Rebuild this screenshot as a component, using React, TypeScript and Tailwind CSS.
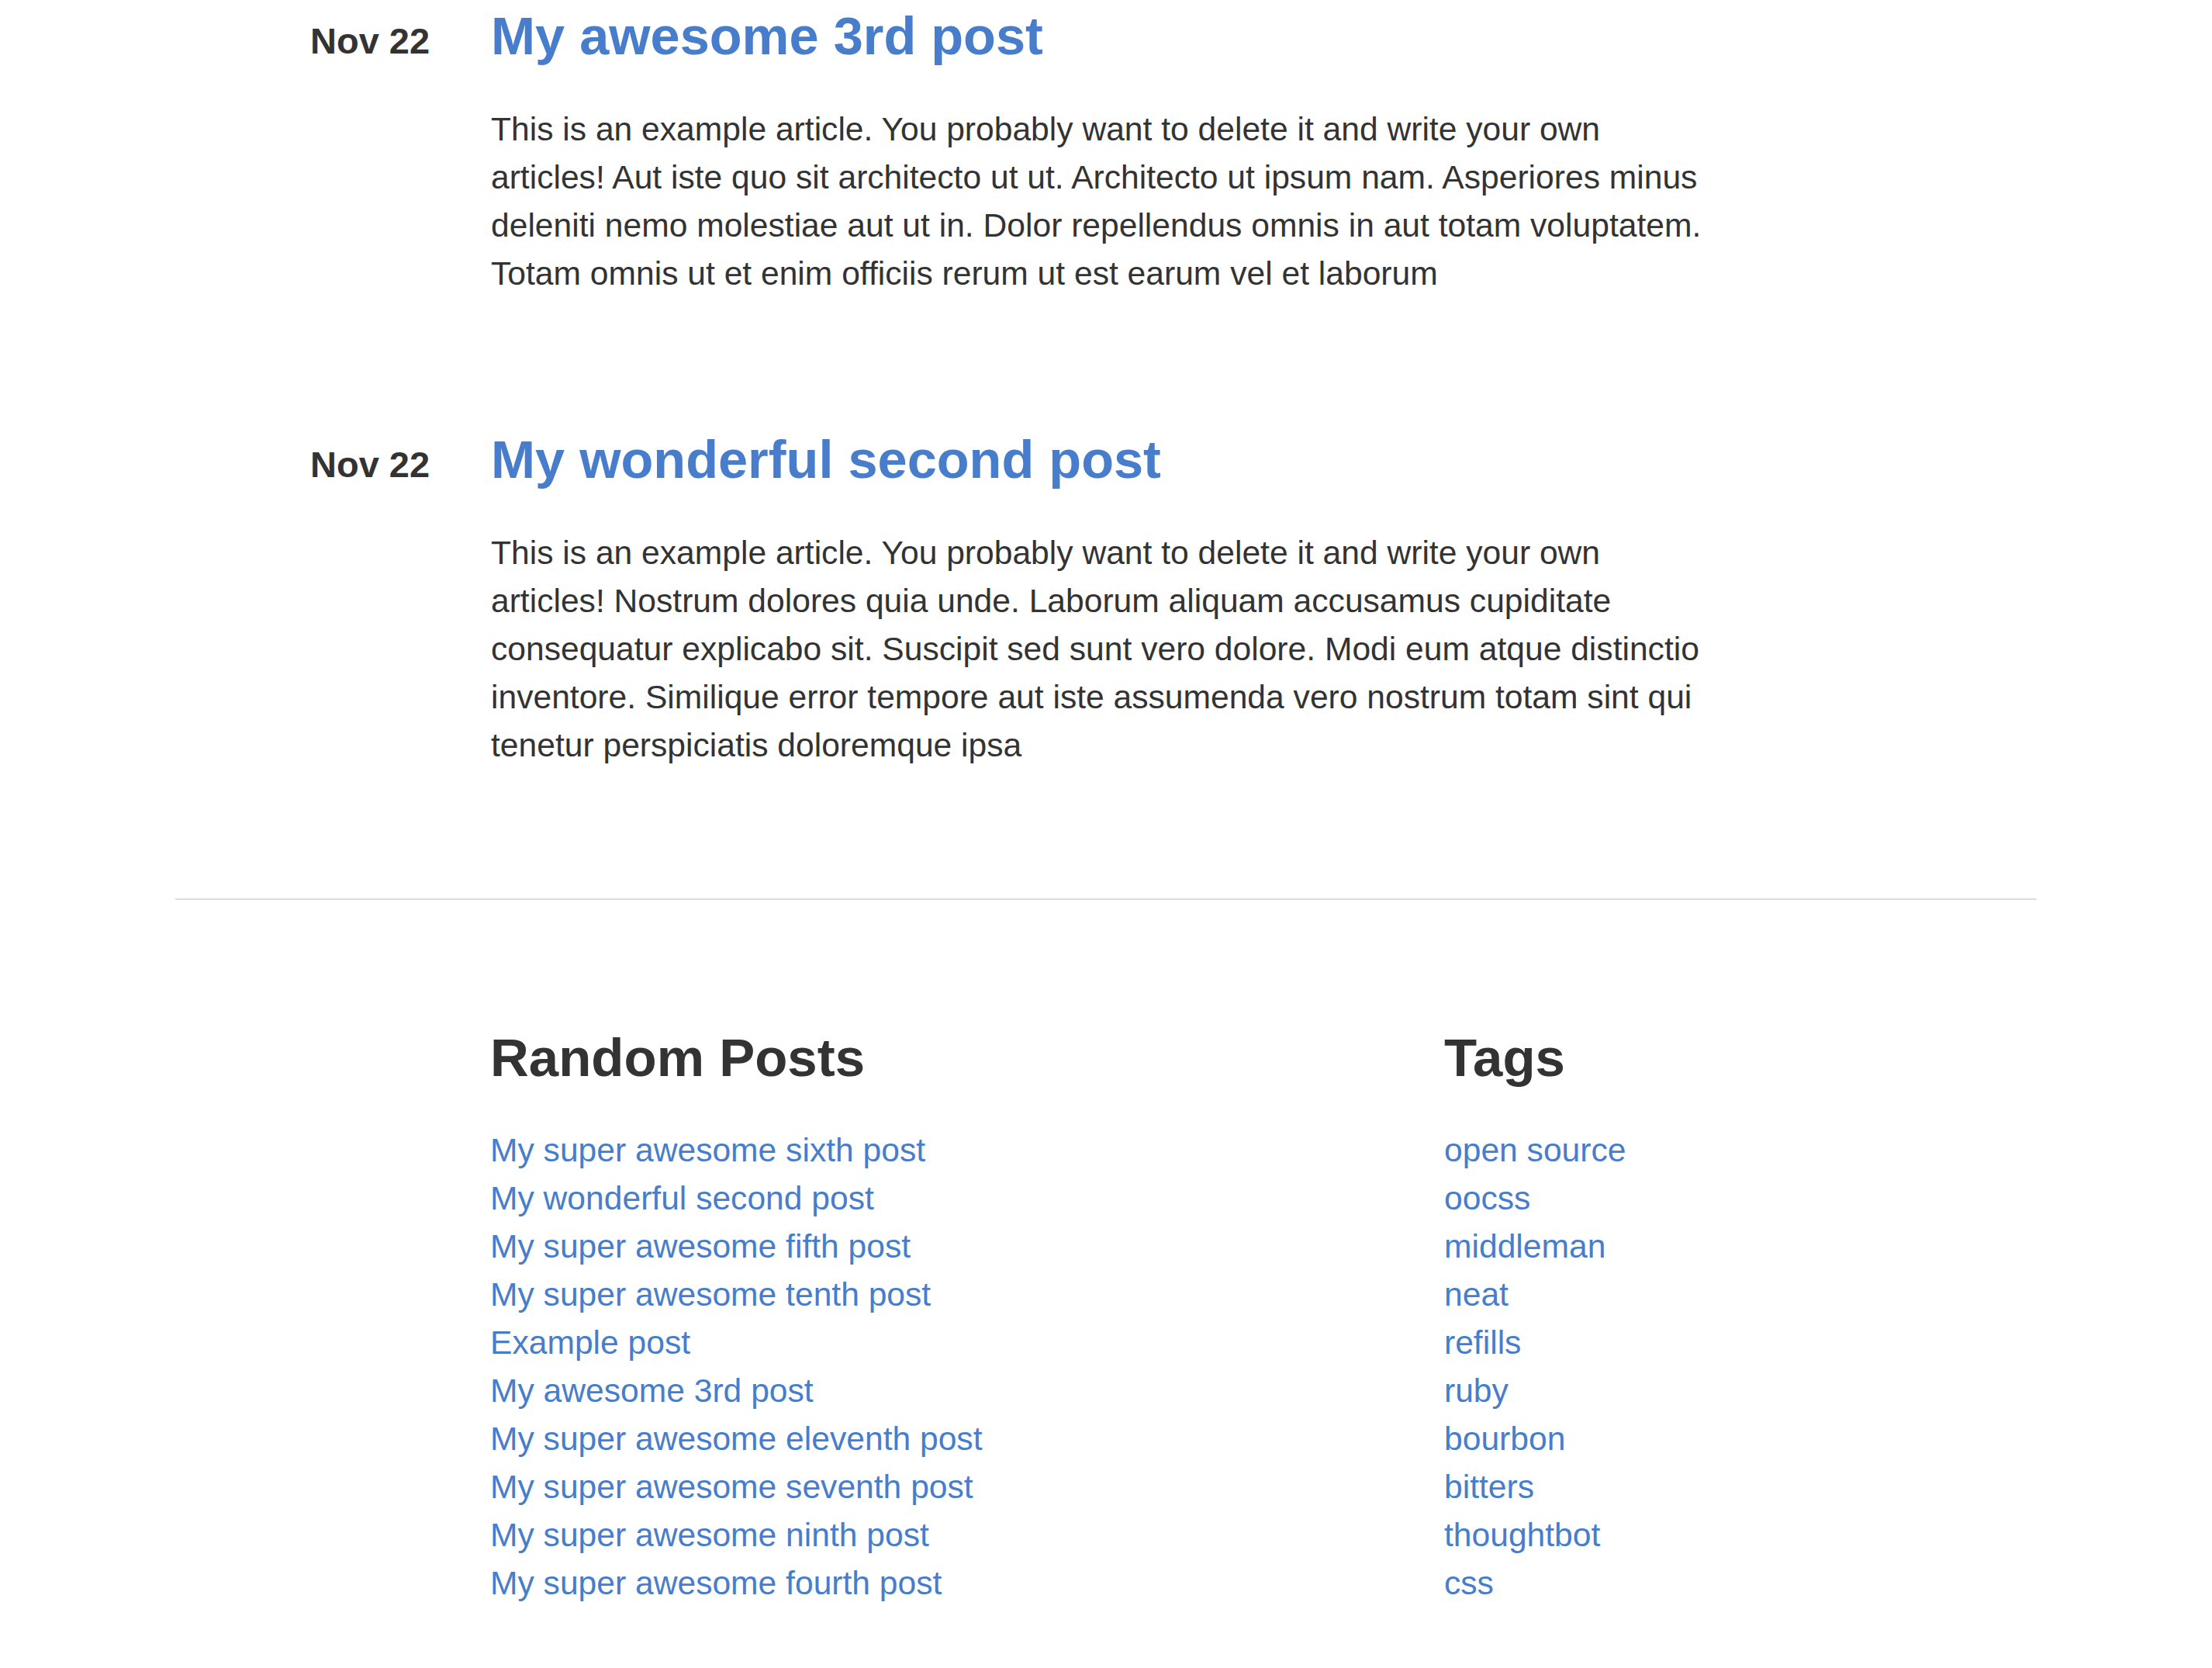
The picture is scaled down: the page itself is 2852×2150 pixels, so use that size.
import React from "react";

const font = { fontFamily: '"Liberation Sans", Arial, sans-serif' };

const posts = [
  {
    date: "Nov 22",
    title: "My awesome 3rd post",
    lines: [
      "This is an example article. You probably want to delete it and write your own",
      "articles! Aut iste quo sit architecto ut ut. Architecto ut ipsum nam. Asperiores minus",
      "deleniti nemo molestiae aut ut in. Dolor repellendus omnis in aut totam voluptatem.",
      "Totam omnis ut et enim officiis rerum ut est earum vel et laborum",
    ],
  },
  {
    date: "Nov 22",
    title: "My wonderful second post",
    lines: [
      "This is an example article. You probably want to delete it and write your own",
      "articles! Nostrum dolores quia unde. Laborum aliquam accusamus cupiditate",
      "consequatur explicabo sit. Suscipit sed sunt vero dolore. Modi eum atque distinctio",
      "inventore. Similique error tempore aut iste assumenda vero nostrum totam sint qui",
      "tenetur perspiciatis doloremque ipsa",
    ],
  },
];

const randomPosts = [
  "My super awesome sixth post",
  "My wonderful second post",
  "My super awesome fifth post",
  "My super awesome tenth post",
  "Example post",
  "My awesome 3rd post",
  "My super awesome eleventh post",
  "My super awesome seventh post",
  "My super awesome ninth post",
  "My super awesome fourth post",
];

const tags = [
  "open source",
  "oocss",
  "middleman",
  "neat",
  "refills",
  "ruby",
  "bourbon",
  "bitters",
  "thoughtbot",
  "css",
];

export default function App() {
  return (
    <div className="min-h-[2150px] bg-white text-[#333]" style={font}>
      <div className="mx-auto w-[2400px]">
        <main className="pt-[4px]">
          {posts.map((p, i) => (
            <article key={i} className="flex pl-[174px] mb-[166px]">
              <div className="w-[233px] shrink-0 pt-[18px]">
                <span className="text-[47px] leading-[62px] font-bold text-[#333]">{p.date}</span>
              </div>
              <div className="flex-1">
                <h2 className="text-[68.5px] leading-[85px] font-bold text-[#477dca]">
                  <a href="#">{p.title}</a>
                </h2>
                <p className="mt-[46px] mb-[1px] text-[42.6px] leading-[62px] text-[#333] whitespace-nowrap">
                  {p.lines.map((l, j) => (
                    <React.Fragment key={j}>
                      {l}
                      {j < p.lines.length - 1 && <br />}
                    </React.Fragment>
                  ))}
                </p>
              </div>
            </article>
          ))}
        </main>
        <div className="h-[2px] bg-[#ddd]" />
        <footer className="flex pl-[406px] pt-[161px]">
          <section className="w-[1230px] shrink-0">
            <h3 className="text-[69px] leading-[85px] font-bold text-[#333]">Random Posts</h3>
            <ul className="mt-[45px]">
              {randomPosts.map((r) => (
                <li key={r} className="text-[42.6px] leading-[62px] text-[#477dca]">
                  <a href="#">{r}</a>
                </li>
              ))}
            </ul>
          </section>
          <section className="flex-1">
            <h3 className="text-[69px] leading-[85px] font-bold text-[#333]">Tags</h3>
            <ul className="mt-[45px]">
              {tags.map((t) => (
                <li key={t} className="text-[42.6px] leading-[62px] text-[#477dca]">
                  <a href="#">{t}</a>
                </li>
              ))}
            </ul>
          </section>
        </footer>
      </div>
    </div>
  );
}
